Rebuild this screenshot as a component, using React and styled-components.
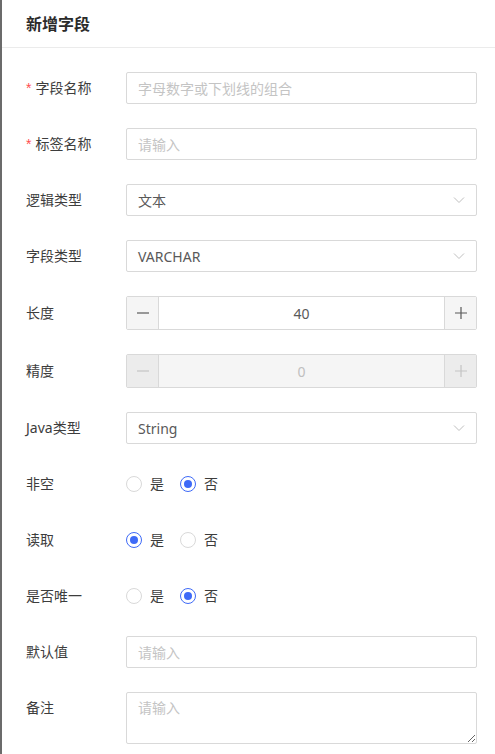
import React from "react";
import styled, { createGlobalStyle } from "styled-components";

const GlobalStyle = createGlobalStyle`
  html, body { margin: 0; padding: 0; background: #fff; }
  body {
    font-family: "Noto Sans", "Noto Sans CJK SC", sans-serif;
    font-size: 14px;
    color: #3a3a3a;
  }
  * { box-sizing: border-box; }
`;

const Screen = styled.div`
  display: flex;
  height: 754px;
  overflow: hidden;
`;

const Mask = styled.div`
  width: 2px;
  flex: none;
  background: #6b6b6b;
`;

const Drawer = styled.div`
  flex: 1;
  display: flex;
  flex-direction: column;
  background: #fff;
  min-width: 0;
`;

const Header = styled.div`
  height: 48px;
  flex: none;
  display: flex;
  align-items: center;
  padding: 0 24px 2px;
  border-bottom: 1px solid #ebebeb;
`;

const Title = styled.div`
  font-size: 16px;
  font-weight: 700;
  color: #2b2b2b;
`;

const Body = styled.div`
  padding: 24px 18px 24px 24px;
  display: flex;
  flex-direction: column;
`;

const Row = styled.div`
  display: flex;
  align-items: ${(p) => (p.$top ? "flex-start" : "center")};
  margin-bottom: 24px;
  min-height: ${(p) => p.$h || 32}px;
`;

const Label = styled.div`
  width: 100px;
  flex: none;
  color: #3d3d3d;
  line-height: 32px;
`;

const Star = styled.span`
  color: #ff4d4f;
  margin-right: 4px;
  font-family: "Liberation Sans", sans-serif;
`;

const Control = styled.div`
  flex: 1;
  min-width: 0;
`;

const TextInput = styled.input`
  width: 100%;
  height: 32px;
  border: 1px solid #d9d9d9;
  border-radius: 2px;
  padding: 0 11px;
  font: inherit;
  font-size: 14px;
  color: #595959;
  outline: none;
  &::placeholder { color: #c4c4c4; }
`;

const TextArea = styled.textarea`
  display: block;
  width: 100%;
  height: 52px;
  border: 1px solid #d9d9d9;
  border-radius: 2px;
  padding: 4px 11px;
  font: inherit;
  font-size: 14px;
  line-height: 22px;
  color: #595959;
  outline: none;
  &::placeholder { color: #c4c4c4; }
`;

const Select = styled.div`
  height: 32px;
  border: 1px solid #d9d9d9;
  border-radius: 2px;
  padding: 0 11px;
  display: flex;
  align-items: center;
  justify-content: space-between;
  color: #595959;
`;

const NumberBox = styled.div`
  height: 34px;
  border: 1px solid #d9d9d9;
  border-radius: 2px;
  display: flex;
  background: ${(p) => (p.$disabled ? "#f5f5f5" : "#fff")};
  color: ${(p) => (p.$disabled ? "#bfbfbf" : "#595959")};
`;

const StepButton = styled.div`
  width: 32px;
  flex: none;
  display: flex;
  align-items: center;
  justify-content: center;
  background: ${(p) => (p.$disabled ? "#ececec" : "#f5f5f5")};
  border-${(p) => (p.$side === "left" ? "right" : "left")}: 1px solid #d9d9d9;
`;

const NumberValue = styled.div`
  flex: 1;
  display: flex;
  align-items: center;
  justify-content: center;
  font-size: 14px;
`;

const RadioGroup = styled.div`
  display: flex;
  align-items: center;
`;

const RadioOption = styled.label`
  display: inline-flex;
  align-items: center;
  margin-right: 8px;
  color: #3d3d3d;
`;

const RadioCircle = styled.span`
  width: 16px;
  height: 16px;
  border-radius: 50%;
  border: 1px solid ${(p) => (p.$checked ? "#3e6af7" : "#d9d9d9")};
  display: flex;
  align-items: center;
  justify-content: center;
  &::after {
    content: "";
    width: 8px;
    height: 8px;
    border-radius: 50%;
    background: #3e6af7;
    display: ${(p) => (p.$checked ? "block" : "none")};
  }
`;

const RadioText = styled.span`
  padding: 0 8px;
  line-height: 22px;
`;

const Chevron = () => (
  <svg width="12" height="8" viewBox="0 0 12 8" fill="none">
    <path d="M1 1.5 L6 6.5 L11 1.5" stroke="#bfbfbf" strokeWidth="1" />
  </svg>
);

const Minus = ({ color }) => (
  <svg width="14" height="14" viewBox="0 0 14 14">
    <path d="M1 7 H13" stroke={color} strokeWidth="1.2" />
  </svg>
);

const Plus = ({ color }) => (
  <svg width="14" height="14" viewBox="0 0 14 14">
    <path d="M1 7 H13 M7 1 V13" stroke={color} strokeWidth="1.2" />
  </svg>
);

const Stepper = ({ value, disabled }) => {
  const c = disabled ? "#c4c4c4" : "#595959";
  return (
    <NumberBox $disabled={disabled}>
      <StepButton $side="left" $disabled={disabled}>
        <Minus color={c} />
      </StepButton>
      <NumberValue>{value}</NumberValue>
      <StepButton $side="right" $disabled={disabled}>
        <Plus color={c} />
      </StepButton>
    </NumberBox>
  );
};

const YesNo = ({ value }) => (
  <RadioGroup>
    <RadioOption>
      <RadioCircle $checked={value === true} />
      <RadioText>是</RadioText>
    </RadioOption>
    <RadioOption>
      <RadioCircle $checked={value === false} />
      <RadioText>否</RadioText>
    </RadioOption>
  </RadioGroup>
);

const Field = ({ label, required, children, h, top }) => (
  <Row $h={h} $top={top}>
    <Label>
      {required && <Star>*</Star>}
      {label}
    </Label>
    <Control>{children}</Control>
  </Row>
);

export default function App() {
  return (
    <>
      <GlobalStyle />
      <Screen>
        <Mask />
        <Drawer>
          <Header>
            <Title>新增字段</Title>
          </Header>
          <Body>
            <Field label="字段名称" required>
              <TextInput placeholder="字母数字或下划线的组合" />
            </Field>
            <Field label="标签名称" required>
              <TextInput placeholder="请输入" />
            </Field>
            <Field label="逻辑类型">
              <Select>
                <span>文本</span>
                <Chevron />
              </Select>
            </Field>
            <Field label="字段类型">
              <Select>
                <span>VARCHAR</span>
                <Chevron />
              </Select>
            </Field>
            <Field label="长度" h={34}>
              <Stepper value="40" />
            </Field>
            <Field label="精度" h={34}>
              <Stepper value="0" disabled />
            </Field>
            <Field label="Java类型">
              <Select>
                <span>String</span>
                <Chevron />
              </Select>
            </Field>
            <Field label="非空">
              <YesNo value={false} />
            </Field>
            <Field label="读取">
              <YesNo value={true} />
            </Field>
            <Field label="是否唯一">
              <YesNo value={false} />
            </Field>
            <Field label="默认值">
              <TextInput placeholder="请输入" />
            </Field>
            <Field label="备注" top h={52}>
              <TextArea placeholder="请输入" />
            </Field>
          </Body>
        </Drawer>
      </Screen>
    </>
  );
}
